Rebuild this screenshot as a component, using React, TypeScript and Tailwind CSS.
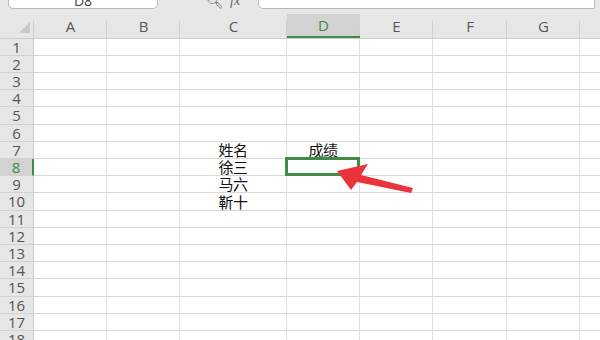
import React from "react";

const colW = [34, 73, 73, 107, 73, 73, 74, 73, 40];
const colNames = ["", "A", "B", "C", "D", "E", "F", "G", ""];
const rowH = [17, 17, 17, 17, 18, 17, 17, 17, 17, 18, 17, 17, 17, 17, 18, 17, 17, 17];

const cellData: Record<string, string> = {
  "7-3": "姓名",
  "8-3": "徐三",
  "9-3": "马六",
  "10-3": "靳十",
  "7-4": "成绩",
};

export default function App() {
  return (
    <div
      className="relative w-[600px] h-[340px] overflow-hidden bg-white"
      style={{ fontFamily: '"Open Sans", "Noto Sans", sans-serif' }}
    >
      {/* formula bar */}
      <div className="h-[14px] bg-[#e7e7e7] flex items-end overflow-hidden">
        <div className="ml-[8px] w-[150px] h-[22px] mb-[5px] bg-white border border-[#b9b9b9] rounded-b-[5px] flex items-center justify-center text-[14px] text-[#444] leading-none pt-[6px] shrink-0">
          D8
        </div>
        <div className="w-[100px] h-[14px] flex items-center gap-[6px] pl-[48px] text-[#666] text-[14px] leading-none -mt-[14px] mb-[6px]">
          <span>🔍︎</span>
          <span className="italic" style={{ fontFamily: '"Liberation Serif", serif' }}>fx</span>
        </div>
        <div className="flex-1 mr-[5px] h-[22px] mb-[5px] bg-white border border-[#b9b9b9] rounded-bl-[5px]" />
      </div>

      {/* column header */}
      <div className="h-[25px] flex bg-[#e6e6e6] border-b border-[#cfcfcf]">
        {colW.map((w, i) => {
          const sel = i === 4;
          return (
            <div
              key={i}
              style={{ width: w }}
              className={
                "shrink-0 relative flex items-center justify-center text-[15px] leading-none " +
                (sel
                  ? "bg-[#d2d2d2] text-[#3f8a4a] border-b-2 border-[#3e8c46]"
                  : "text-[#595959]")
              }
            >
              {i === 0 ? (
                <svg width="34" height="25" className="absolute left-0 top-0">
                  <polygon points="19,19 30,8 30,19" fill="#c9c9c9" />
                </svg>
              ) : null}
              <span className="pt-[1px]">{colNames[i]}</span>
              {i < colW.length - 1 && (
                <div className="absolute right-0 top-[6px] bottom-0 w-px bg-[#d0d0d0]" />
              )}
            </div>
          );
        })}
      </div>

      {/* rows */}
      {rowH.map((h, r) => {
        const rowNo = r + 1;
        const selRow = rowNo === 8;
        return (
          <div key={r} className="flex" style={{ height: h }}>
            {colW.map((w, c) => {
              if (c === 0) {
                return (
                  <div
                    key={c}
                    style={{ width: w }}
                    className={
                      "shrink-0 flex items-center justify-center text-[15px] leading-none border-b border-[#d2d2d2] border-r " +
                      (selRow
                        ? "bg-[#d2d2d2] text-[#3f8a4a] border-r-2 border-r-[#3e8c46]"
                        : "bg-[#e6e6e6] text-[#555] border-r-[#cfcfcf]")
                    }
                  >
                    {rowNo}
                  </div>
                );
              }
              const key = `${rowNo}-${c}`;
              const txt = cellData[key];
              const isSel = rowNo === 8 && c === 4;
              return (
                <div
                  key={c}
                  style={{ width: w }}
                  className="shrink-0 relative border-r border-[#e0e0e0] border-b border-b-[#d7d7d7] flex items-end justify-center"
                >
                  {txt && (
                    <span
                      className="text-[15px] leading-[17px] text-[#111] tracking-[-0.5px]"
                      style={{ fontFamily: '"Noto Sans CJK SC", sans-serif' }}
                    >
                      {txt}
                    </span>
                  )}
                  {isSel && (
                    <div className="absolute -left-[2px] -top-[2px] -right-[1px] -bottom-[1px] border-[3px] border-[#3e8c46]" />
                  )}
                </div>
              );
            })}
          </div>
        );
      })}

      {/* red arrow */}
      <svg className="absolute left-0 top-0 pointer-events-none" width="600" height="340">
        <polygon
          points="337,171 368,164 361,175 413,188 411,193 357,182 351,190"
          fill="#e8343a"
        />
      </svg>
    </div>
  );
}
